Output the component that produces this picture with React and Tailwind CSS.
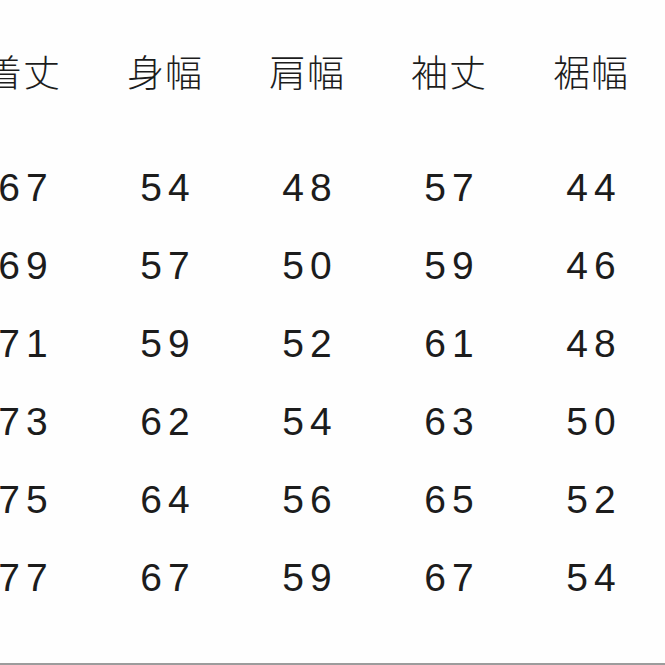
import React from "react";

const headers = ["着丈", "身幅", "肩幅", "袖丈", "裾幅"];
const rows = [
  ["67", "54", "48", "57", "44"],
  ["69", "57", "50", "59", "46"],
  ["71", "59", "52", "61", "48"],
  ["73", "62", "54", "63", "50"],
  ["75", "64", "56", "65", "52"],
  ["77", "67", "59", "67", "54"],
];

export default function App() {
  return (
    <div className="w-[665px] h-[665px] bg-[#fefefe] overflow-hidden flex flex-col text-[#1c1c1c]">
      <div className="ml-[-48px] mt-[33px] grid grid-cols-[repeat(5,142px)]">
        {headers.map((h) => (
          <div
            key={h}
            className="h-[78px] flex items-center justify-center text-[37px] tracking-[1px] font-light"
            style={{ fontFamily: '"Noto Sans CJK JP", "Noto Sans", sans-serif' }}
          >
            {h}
          </div>
        ))}
      </div>
      <div className="ml-[-48px] mt-[38px] grid grid-cols-[repeat(5,142px)]">
        {rows.map((r, i) =>
          r.map((v, j) => (
            <div
              key={i + "-" + j}
              className="h-[78px] flex items-center justify-center text-[39px] tracking-[6px] pl-[6px] font-['Liberation_Sans',Arial,sans-serif]"
            >
              {v}
            </div>
          ))
        )}
      </div>
      <div className="mt-auto mb-0 h-[2px] bg-[#9c9c9c]" />
    </div>
  );
}
